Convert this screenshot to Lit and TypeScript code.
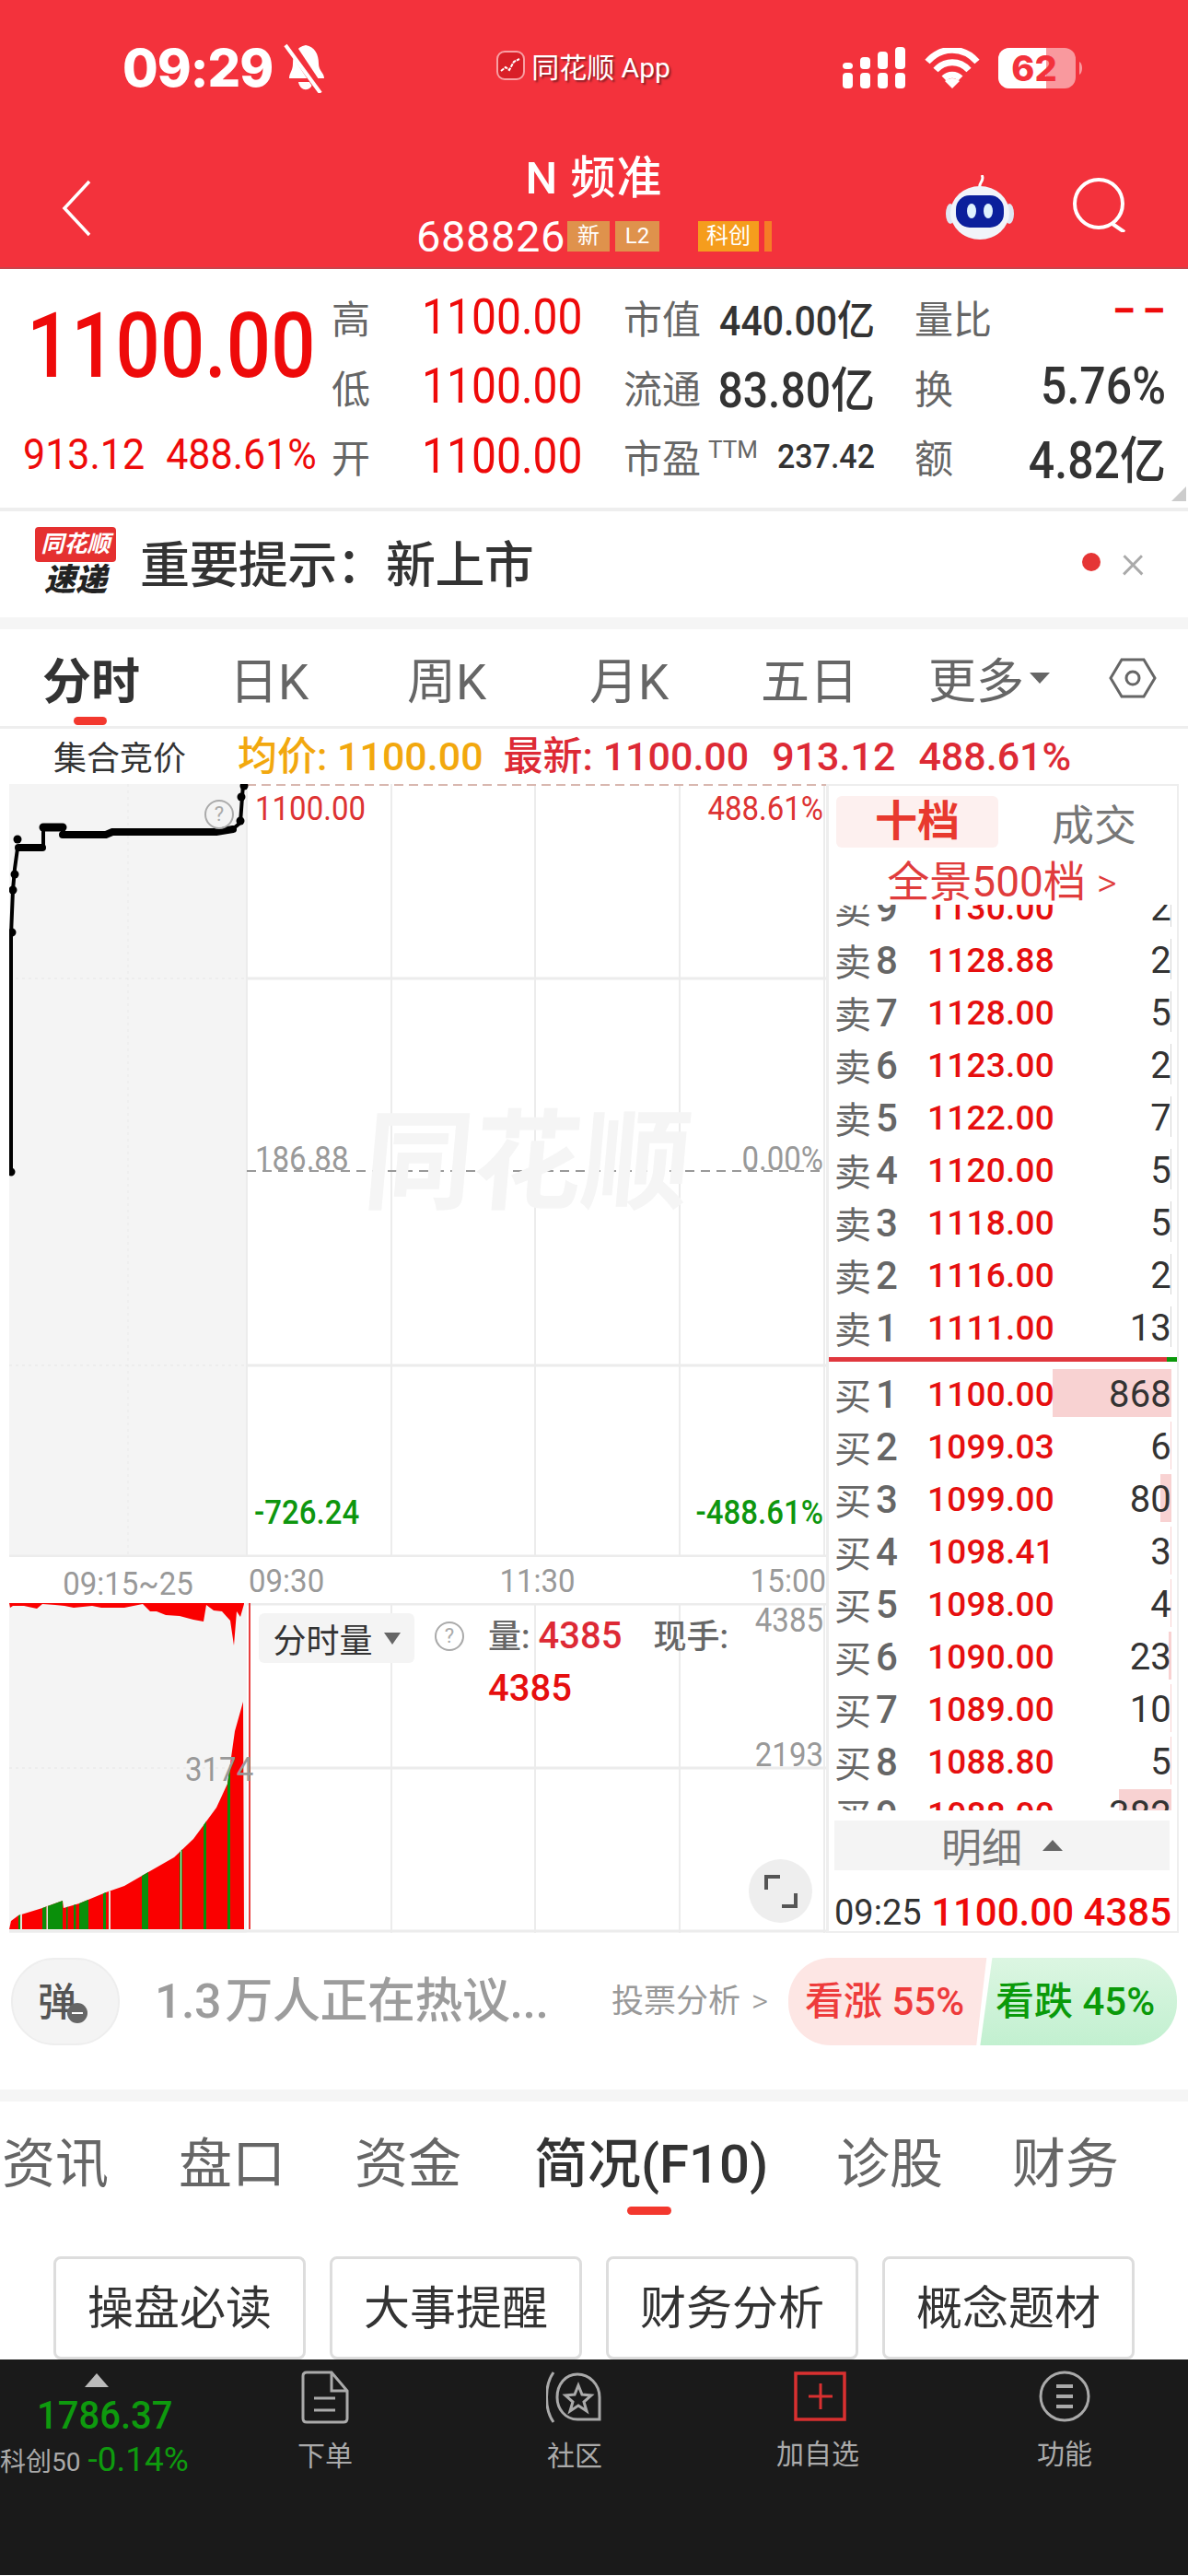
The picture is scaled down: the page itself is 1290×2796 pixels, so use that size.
import { LitElement, html, css, svg } from "lit";
import { customElement } from "lit/decorators.js";

const sells = [
  ["9", "1130.00", "2"],
  ["8", "1128.88", "2"],
  ["7", "1128.00", "5"],
  ["6", "1123.00", "2"],
  ["5", "1122.00", "7"],
  ["4", "1120.00", "5"],
  ["3", "1118.00", "5"],
  ["2", "1116.00", "2"],
  ["1", "1111.00", "13"],
];

const buys = [
  ["1", "1100.00", "868", 129],
  ["2", "1099.03", "6", 1],
  ["3", "1099.00", "80", 12],
  ["4", "1098.41", "3", 1],
  ["5", "1098.00", "4", 1],
  ["6", "1090.00", "23", 3],
  ["7", "1089.00", "10", 1],
  ["8", "1088.80", "5", 1],
  ["9", "1088.00", "382", 57],
];

// label, width of its slot
const tabs: [string, number][] = [["分时", 203], ["日K", 193], ["周K", 198], ["月K", 186], ["五日", 182]];
const lowerTabs = ["资讯", "盘口", "资金", "简况(F10)", "诊股", "财务"];
const quick = ["操盘必读", "大事提醒", "财务分析", "概念题材"];

// volume curve of the auction column, local coordinates of the 887x358 chart
const volCurve = "M0 354 L2 345 L10 339 L36 331 L58 323 L59 331 L76 326 L105 314 L125 307 L151 292 L179 276 L200 256 L225 222 L237 196 L245 139 L254 107 L255 354 Z";
const volTop = "M0 0 L1 5 L4 3 L16 3 L30 6 L36 1 L50 2 L60 3 L70 5 L90 3 L100 5 L125 5 L145 1 L153 9 L160 9 L170 13 L185 14 L200 18 L211 20 L214 2 L222 8 L231 9 L240 19 L244 46 L247 9 L251 15 L255 1 L255 0 Z";
const greenBars = [[10, 2], [36, 4.5], [42, 16], [62, 1.5], [70, 2.5], [76, 10], [102, 3], [144, 7], [185, 3], [211, 3], [237, 3]];
const paleBars = [[40.5, 1.5], [12, 2], [108, 2], [186, 1]];

@customElement("app-root")
export class AppRoot extends LitElement {
  static styles = css`
    :host {
      display: block;
      width: 1290px;
      height: 2796px;
      overflow: hidden;
      background: #fff;
      color: #333;
      font-family: Roboto, "Noto Sans CJK SC", sans-serif;
    }
    .header {
      height: 292px;
      background: #f3323c;
      color: #fff;
      box-sizing: border-box;
      border-bottom: 2px solid #c9444b;
    }
    .status {
      height: 140px;
      display: grid;
      grid-template-columns: 1fr auto 1fr;
      align-items: center;
      box-sizing: border-box;
      padding: 8px 112px 0 133px;
    }
    .status-left { display: flex; align-items: center; gap: 12px; }
    .time { font: 800 56px Inter, Roboto, sans-serif; letter-spacing: -1px; }
    .app-name {
      display: flex;
      align-items: center;
      gap: 7px;
      font-size: 30px;
      margin: -6px 44px 0 0;
      text-shadow: 2px 2px 2px #8a1f27;
    }
    .status-right { display: flex; justify-content: flex-end; align-items: center; gap: 20px; }
    .nav {
      display: grid;
      grid-template-columns: 1fr auto 1fr;
      height: 150px;
    }
    .back { padding: 55px 0 0 66px; }
    .title { text-align: center; }
    .name { font-size: 49px; font-weight: 500; line-height: 56px; margin-top: 26px; letter-spacing: 1px; }
    .code { display: flex; align-items: center; height: 40px; margin-top: 14px; }
    .code b { font-size: 47px; font-weight: 400; margin-right: 2px; letter-spacing: 0.6px; }
    .tag { font-size: 24px; height: 33px; line-height: 33px; text-align: center; background: #df924c; margin-right: 6px; width: 46px; }
    .tag.l2 { width: 48px; margin-right: 42px; }
    .tag.kc { width: 66px; background: #f59d1d; }
    .tag.end { width: 8px; background: #f59d1d; opacity: 0.7; margin: 0; }
    .nav-right { display: flex; justify-content: flex-end; gap: 62px; padding: 50px 66px 0 0; align-items: flex-start; }

    .stats { display: flex; height: 259px; position: relative; }
    .price-block { width: 360px; box-sizing: border-box; padding: 40px 0 0 25px; color: #ee0a0a; }
    .big { font-size: 85px; line-height: 86px; font-weight: 500; margin-left: 4px; transform: scaleY(1.16); transform-origin: 0 50%; }
    .sub { display: flex; gap: 23px; font-size: 43px; margin-top: 50px; line-height: 50px; transform: scaleY(1.08); }
    .grid {
      display: grid;
      grid-template-columns: 98px 219px 273px 43px 273px;
      grid-auto-rows: 75.5px;
      align-items: center;
      padding-top: 14px;
    }
    .lab { font-size: 42px; color: #666; }
    .red { color: #ee0a0a; }
    .val { font-size: 48px; line-height: 50px; transform: scaleY(1.12); }
    .pair { display: flex; justify-content: space-between; align-items: center; }
    .pair .num { color: #333; transform: scaleY(1.1); font-weight: 500; font-size: 48px; }
    .pair .num.wide { font-size: 50px; }
    .pair .num.mid { font-size: 41px; }
    .pair .num.small { font-size: 34px; }
    .dash { font-size: 46px; font-weight: 700; letter-spacing: 7px; margin: -14px -7px 0 0; }
    .ttm { font-size: 26px; color: #666; margin: -14px auto 0 8px; }
    .corner { position: absolute; right: 2px; bottom: 7px; width: 0; height: 0; border-left: 16px solid transparent; border-bottom: 16px solid #ccc; }
    .sep { height: 4px; background: #eee; }
    .notice { height: 115px; display: flex; align-items: center; padding: 0 46px 6px 38px; box-sizing: border-box; }
    .logo { width: 88px; margin-right: 26px; text-align: center; }
    .logo .bub { background: #e53030; color: #fff; font-size: 25px; font-style: italic; font-weight: 700; height: 38px; line-height: 38px; border-radius: 4px; }
    .logo .sd { font-size: 34px; font-style: italic; font-weight: 900; line-height: 38px; color: #222; }
    .notice-text { flex: 1; font-size: 54px; font-weight: 500; letter-spacing: -0.6px; }
    .dot { width: 20px; height: 20px; border-radius: 50%; background: #e53535; margin-right: 22px; }
    .close { font-size: 52px; color: #aaa; font-weight: 300; line-height: 40px; }
    .band { height: 13px; background: #f5f5f5; }

    .tabs { height: 108px; display: flex; align-items: center; border-bottom: 3px solid #eee; box-sizing: border-box; position: relative; padding: 0 34px 0 46px; font-size: 53px; color: #666; }
    .tabs span { flex: none; }
    .tabs span.on { color: #333; font-weight: 700; }
    .tabs .more { display: flex; align-items: center; gap: 6px; flex: 1; font-size: 52px; }
    .tri { width: 0; height: 0; border-left: 11px solid transparent; border-right: 11px solid transparent; border-top: 12px solid #666; }
    .mark { position: absolute; left: 80px; bottom: 1px; width: 36px; height: 9px; border-radius: 5px; background: #f3382e; }
    .quote { height: 60px; display: flex; align-items: baseline; font-size: 43px; line-height: 60px; font-weight: 500; white-space: nowrap; }
    .quote .auction { font-size: 36px; font-weight: 400; width: 200px; padding-left: 58px; box-sizing: border-box; margin-right: 58px; color: #333; }
    .avg { color: #f2a80e; margin-right: 22px; }
    .last { color: #dd2a35; display: flex; gap: 25px; align-items: baseline; }

    .charts { display: flex; height: 1247px; padding-left: 10px; }
    .left { width: 887px; flex: none; display: flex; flex-direction: column; }
    .price-chart { height: 839px; position: relative; }
    .vol-chart { height: 358px; position: relative; }
    .chart-bg { display: block; position: absolute; inset: 0; }
    .axis { position: absolute; font-size: 33px; line-height: 36px; color: #999; transform: scaleY(1.14); }
    .axis.r { right: 3px; }
    .axis.c-red { color: #dd3333; }
    .axis.c-green { color: #0e960e; font-weight: 500; }
    .wm { position: absolute; left: 386px; top: 352px; font-size: 118px; font-weight: 700; color: #f5f5f5; line-height: 120px; white-space: nowrap; transform: skewX(-5deg); }
    .time-row { height: 50px; display: flex; font-size: 33px; color: #999; align-items: center; transform: scaleY(1.08); }
    .time-row .auc { width: 258px; text-align: center; padding-top: 6px; box-sizing: border-box; }
    .time-row .rest { flex: 1; display: flex; justify-content: space-between; padding-left: 2px; }
    .hint { position: absolute; width: 28px; height: 28px; border: 2px solid #aaa; border-radius: 50%; color: #aaa; font-size: 22px; line-height: 28px; text-align: center; font-style: normal; }
    .fs-btn { position: absolute; left: 271px; top: 11px; width: 169px; height: 54px; background: #f4f4f4; border-radius: 6px; display: flex; align-items: center; justify-content: center; gap: 12px; font-size: 36px; }
    .fs-tri { width: 0; height: 0; border-left: 9px solid transparent; border-right: 9px solid transparent; border-top: 13px solid #666; }
    .vol-info { position: absolute; left: 520px; top: 8px; width: 290px; font-size: 36px; line-height: 55px; color: #666; font-weight: 500; }
    .vol-info em { font-style: normal; color: #dd2a35; margin: 0 34px 0 0; font-size: 40px; }
    .vol-info em.next { color: #e60f0f; }
    .expand { position: absolute; left: 803px; top: 278px; width: 69px; height: 69px; border-radius: 50%; background: #eee; display: flex; align-items: center; justify-content: center; }

    .book { width: 383px; flex: none; box-sizing: border-box; border: 2px solid #eee; border-left-width: 3px; height: 1247px; display: flex; flex-direction: column; }
    .book-tabs { height: 64px; padding: 7px 0 0 8px; display: flex; align-items: center; font-size: 46px; box-sizing: content-box; }
    .book-tabs b { width: 176px; height: 56px; line-height: 54px; background: #fdf0ef; border-radius: 6px; text-align: center; color: #e8392e; font-weight: 700; }
    .book-tabs span { flex: 1; text-align: center; color: #777; padding-right: 0; margin-left: 14px; }
    .deep { height: 58px; text-align: center; color: #e03c3c; font-size: 46px; line-height: 66px; white-space: nowrap; padding-right: 2px; flex: none; }
    .deep i { font-style: normal; margin-left: 12px; font-size: 42px; font-weight: 300; }
    .list { overflow: hidden; display: flex; flex-direction: column; flex: none; }
    .list.sell { height: 491px; justify-content: flex-end; padding-bottom: 4px; box-sizing: border-box; }
    .list.buy { height: 487px; padding-top: 6px; box-sizing: border-box; }
    .row { height: 57px; flex: none; display: grid; grid-template-columns: 45px 56px 1fr auto; align-items: center; padding: 0 6px; position: relative; font-size: 37px; letter-spacing: 0.2px; }
    .row .cn { font-size: 40px; color: #666; position: relative; }
    .row .no { color: #666; font-size: 42px; font-weight: 500; position: relative; }
    .row .p { color: #e60f0f; font-weight: 500; position: relative; }
    .row .q { color: #333; position: relative; font-size: 40px; }
    .qbar { position: absolute; right: 6px; top: 2px; height: 52px; background: #f8d2d2; }
    .tick { position: absolute; right: 6px; top: 6px; width: 1px; height: 44px; background: #d5d5d5; }
    .split { height: 5px; flex: none; display: flex; background: #e0373e; }
    .split i { margin-left: auto; width: 11px; background: #0a980a; }
    .detail { margin: 11px 8px 0 6px; height: 54px; background: #f4f4f4; display: flex; align-items: center; justify-content: center; gap: 22px; color: #777; font-size: 44px; flex: none; }
    .up { width: 0; height: 0; border-left: 11px solid transparent; border-right: 11px solid transparent; border-bottom: 12px solid #666; }
    .tape { display: flex; justify-content: space-between; padding: 21px 6px 0 6px; font-size: 42px; color: #ee0a0a; line-height: 50px; font-weight: 500; }
    .tape span:first-child { color: #333; font-size: 38px; font-weight: 400; }

    .talk { height: 170px; display: flex; align-items: flex-start; padding: 27px 12px 0 12px; box-sizing: border-box; }
    .dan { width: 118px; height: 95px; background: #f4f4f4; border: 2px solid #eee; box-sizing: border-box; border-radius: 48px; display: flex; align-items: center; justify-content: center; padding: 0 18px 6px 0; font-size: 42px; color: #555; font-weight: 500; position: relative; margin-right: 38px; }
    .dan i { position: absolute; right: 33px; bottom: 22px; width: 22px; height: 22px; border-radius: 50%; background: #666; }
    .dan i::after { content: ""; position: absolute; left: 5px; right: 5px; top: 10px; height: 2px; background: #fff; }
    .hot { font-size: 52px; color: #9c9c9c; width: 496px; line-height: 95px; white-space: nowrap; font-weight: 500; letter-spacing: -0.5px; word-spacing: -8px; }
    .vote { font-size: 35px; color: #999; width: 192px; line-height: 95px; white-space: nowrap; }
    .vote i { font-style: normal; margin-left: 12px; font-weight: 300; }
    .bull, .bear { height: 95px; line-height: 95px; font-size: 42px; font-weight: 500; white-space: nowrap; box-sizing: border-box; flex: none; }
    .bull { width: 222px; padding-left: 18px; color: #ee3b3b; background: #fde6e4; border-radius: 46px 0 0 46px; clip-path: polygon(0 0, 97% 0, 92% 100%, 0 100%); }
    .bear { width: 218px; margin-left: -18px; padding-left: 21px; color: #0a9a0a; background: linear-gradient(#dcf6e2, #c2f0d0); border-radius: 0 46px 46px 0; clip-path: polygon(8% 0, 100% 0, 100% 100%, 2% 100%); }

    .ltabs { height: 168px; position: relative; font-size: 58px; color: #666; }
    .ltabs span { position: absolute; top: 37px; white-space: nowrap; line-height: 62px; }
    .ltabs span.on { color: #333; font-weight: 500; }
    .ltabs i { position: absolute; left: 681px; top: 114px; width: 48px; height: 9px; border-radius: 5px; background: #f3382e; }
    .quick { height: 112px; display: flex; gap: 26px; padding-left: 58px; }
    .quick div { width: 274px; height: 112px; box-sizing: border-box; border: 3px solid #ddd; border-radius: 8px; font-size: 50px; text-align: center; line-height: 108px; color: #333; }

    .dock { height: 234px; background: #1a1a1a; display: flex; position: relative; }
    .idx { width: 240px; flex: none; position: relative; }
    .idx .arrow { margin: 15px 0 0 92px; width: 0; height: 0; border-left: 13px solid transparent; border-right: 13px solid transparent; border-bottom: 15px solid #bbb; }
    .idx .v { color: #0e9a0e; font-size: 40px; line-height: 46px; margin: 8px 0 0 40px; transform: scaleY(1.08); font-weight: 500; }
    .idx .s { display: flex; align-items: baseline; white-space: nowrap; margin-top: 3px; color: #aaa; font-size: 28px; }
    .idx .s b { font-size: 37px; color: #0e9a0e; font-weight: 400; margin-left: 8px; }
    .act { width: 0; flex: none; position: relative; }
    .cell { position: absolute; top: 12px; width: 160px; margin-left: -80px; text-align: center; color: #aaa; font-size: 30px; }
    .cell svg { display: block; margin: 0 auto 10px; }
  `;

  renderPriceBg() {
    const v = [415, 571, 728, 885];
    return html`<svg class="chart-bg" width="887" height="839" viewBox="0 0 887 839">
      <rect x="0" y="0" width="258" height="839" fill="#f4f4f4"></rect>
      ${v.map((x) => svg`<line x1=${x} y1="0" x2=${x} y2="839" stroke="#ececec" stroke-width="2"></line>`)}
      <line x1="129" y1="0" x2="129" y2="839" stroke="#eaeaea" stroke-width="1" stroke-dasharray="3 4"></line>
      <line x1="258" y1="0" x2="258" y2="839" stroke="#ececec" stroke-width="2"></line>
      <line x1="258" y1="211" x2="887" y2="211" stroke="#ececec" stroke-width="3"></line>
      <line x1="258" y1="631" x2="887" y2="631" stroke="#ececec" stroke-width="3"></line>
      <line x1="0" y1="211" x2="258" y2="211" stroke="#e6e6e6" stroke-dasharray="3 4"></line>
      <line x1="0" y1="631" x2="258" y2="631" stroke="#e6e6e6" stroke-dasharray="3 4"></line>
      <line x1="258" y1="1" x2="887" y2="1" stroke="#d9b8b0" stroke-width="2" stroke-dasharray="10 6"></line>
      <line x1="258" y1="420" x2="887" y2="420" stroke="#999" stroke-width="2" stroke-dasharray="10 7"></line>
      <line x1="0" y1="838" x2="887" y2="838" stroke="#ececec" stroke-width="3"></line>
      <path d="M2 421 L2 164 L4 115 L6 92 L9 70 L9 69" fill="none" stroke="#000" stroke-width="4"></path>
      <path d="M9 69 L37 69 L37 47 L58 46 L58 56 L105 56 L115 52 L225 52 L245 47 L251 42 L254 0" fill="none" stroke="#000" stroke-width="4"></path>
      <path d="M10 69 L36 69" stroke="#000" stroke-width="8" stroke-linecap="round"></path>
      <path d="M37 47 L58 47" stroke="#000" stroke-width="9" stroke-linecap="round"></path>
      <path d="M58 55 L105 55 L112 52 L225 52 L243 49" fill="none" stroke="#000" stroke-width="8" stroke-linecap="round"></path>
      ${[[2, 421], [3, 161], [4, 115], [6, 98], [9, 60], [252, 14], [251, 40], [255, 2]].map(
        ([x, y]) => svg`<circle cx=${x} cy=${y} r="4.5" fill="#000"></circle>`
      )}
    </svg>`;
  }

  renderVolBg() {
    const v = [415, 571, 728, 885];
    return html`<svg class="chart-bg" width="887" height="358" viewBox="0 0 887 358">
      <rect x="0" y="0" width="258" height="358" fill="#f4f4f4"></rect>
      ${v.map((x) => svg`<line x1=${x} y1="0" x2=${x} y2="358" stroke="#ececec" stroke-width="2"></line>`)}
      <line x1="258" y1="1" x2="887" y2="1" stroke="#ececec" stroke-width="3"></line>
      <line x1="258" y1="179" x2="887" y2="179" stroke="#ececec" stroke-width="3"></line>
      <line x1="0" y1="356" x2="887" y2="356" stroke="#ececec" stroke-width="3"></line>
      <line x1="0" y1="179" x2="258" y2="179" stroke="#e6e6e6" stroke-dasharray="3 4"></line>
      <path d=${volCurve} fill="#fa0000"></path>
      <path d=${volTop} fill="#fa0000"></path>
      <clipPath id="volclip"><path d=${volCurve}></path></clipPath>
      <g clip-path="url(#volclip)">
        ${greenBars.map(([x, w]) => svg`<rect x=${x} y="0" width=${w} height="358" fill="#0a8f0a"></rect>`)}
        ${paleBars.map(([x, w]) => svg`<rect x=${x} y="0" width=${w} height="358" fill="#e4e4d8"></rect>`)}
      </g>
      <line x1="261" y1="0" x2="261" y2="354" stroke="#e84040" stroke-width="2"></line>
    </svg>`;
  }

  render() {
    return html`
      <div class="header">
        <div class="status">
          <div class="status-left">
            <span class="time">09:29</span>
            <svg width="46" height="54" viewBox="0 0 46 54">
              <path d="M24 2 C34 4 38 12 38 22 C38 30 44 32 44 38 L6 38 C6 32 10 30 10 22 C10 12 14 4 24 2 Z M16 42 L32 42 C30 53 18 53 16 42 Z" fill="#fff"></path>
              <path d="M6 0 L42 54" stroke="#f3323c" stroke-width="10"></path>
              <path d="M2 2 L40 54" stroke="#fff" stroke-width="4"></path>
            </svg>
          </div>
          <div class="app-name">
            <svg width="31" height="32" viewBox="0 0 31 32">
              <rect x="1" y="1" width="29" height="30" rx="8" fill="#d91f28" stroke="#f9a0a4" stroke-width="2"></rect>
              <path d="M5 22 L10 18 L14 21 L19 12 L25 9" fill="none" stroke="#fff" stroke-width="2" stroke-dasharray="4 1"></path>
            </svg>
            <span>同花顺 App</span>
          </div>
          <div class="status-right">
            <svg width="70" height="46" viewBox="0 0 70 46">
              ${[[1, 17], [20, 11], [39, 5], [58, 0]].map(([x, y]) => svg`
                <rect x=${x} y=${y} width="11" height=${24 - y} rx="4" fill="#fff"></rect>
                <rect x=${x} y="28" width="11" height="17" rx="4" fill="#fff"></rect>`)}
            </svg>
            <svg width="60" height="44" viewBox="0 0 60 44">
              <path d="M3 15 C18 -2 42 -2 57 15 M12 24 C22 13 38 13 48 24 M21 33 C26 28 34 28 39 33" fill="none" stroke="#fff" stroke-width="7"></path>
              <path d="M30 44 L22 36 C27 32 33 32 38 36 Z" fill="#fff"></path>
            </svg>
            <svg width="94" height="46" viewBox="0 0 94 46">
              <rect x="0" y="1" width="84" height="44" rx="12" fill="#fff" fill-opacity="0.5"></rect>
              <path d="M12 1 L52 1 L52 45 L12 45 A12 12 0 0 1 0 33 L0 13 A12 12 0 0 1 12 1 Z" fill="#fff"></path>
              <path d="M88 16 C92 18 92 28 88 30 Z" fill="#fff" fill-opacity="0.5"></path>
              <text x="39" y="37" text-anchor="middle" font-family="Inter, Roboto, sans-serif" font-weight="800" font-size="38" fill="#f3323c">62</text>
            </svg>
          </div>
        </div>
        <div class="nav">
          <div class="back">
            <svg width="34" height="62" viewBox="0 0 34 62"><path d="M31 2 L4 31 L31 60" fill="none" stroke="#fff" stroke-width="3.5"></path></svg>
          </div>
          <div class="title">
            <div class="name">N 频准</div>
            <div class="code">
              <b>688826</b><span class="tag">新</span><span class="tag l2">L2</span><span class="tag kc">科创</span><span class="tag end"></span>
            </div>
          </div>
          <div class="nav-right">
            <svg width="76" height="70" viewBox="0 0 76 70">
              <path d="M38 14 C36 8 44 6 40 0" fill="none" stroke="#fff" stroke-width="3"></path>
              <ellipse cx="6" cy="42" rx="5" ry="11" fill="#dfe6f2"></ellipse>
              <ellipse cx="70" cy="42" rx="5" ry="11" fill="#dfe6f2"></ellipse>
              <ellipse cx="38" cy="41" rx="32" ry="29" fill="#f1f4fa"></ellipse>
              <rect x="12" y="22" width="52" height="35" rx="15" fill="#0b1f9c"></rect>
              <ellipse cx="29" cy="39" rx="5" ry="8" fill="#dff2ff"></ellipse>
              <ellipse cx="47" cy="39" rx="5" ry="8" fill="#dff2ff"></ellipse>
            </svg>
            <svg class="search" width="60" height="62" viewBox="0 0 60 62">
              <circle cx="29" cy="31" r="26" fill="none" stroke="#fff" stroke-width="4"></circle>
              <path d="M44 53 L57 62" stroke="#fff" stroke-width="4"></path>
            </svg>
          </div>
        </div>
      </div>

      <div class="stats">
        <div class="price-block">
          <div class="big">1100.00</div>
          <div class="sub"><span>913.12</span><span>488.61%</span></div>
        </div>
        <div class="grid">
          <span class="lab">高</span><span class="val red">1100.00</span>
          <div class="pair"><span class="lab">市值</span><span class="num mid">440.00亿</span></div>
          <span></span>
          <div class="pair"><span class="lab">量比</span><span class="red dash">−−</span></div>

          <span class="lab">低</span><span class="val red">1100.00</span>
          <div class="pair"><span class="lab">流通</span><span class="num">83.80亿</span></div>
          <span></span>
          <div class="pair"><span class="lab">换</span><span class="num wide">5.76%</span></div>

          <span class="lab">开</span><span class="val red">1100.00</span>
          <div class="pair"><span class="lab">市盈</span><span class="ttm">TTM</span><span class="num small">237.42</span></div>
          <span></span>
          <div class="pair"><span class="lab">额</span><span class="num wide">4.82亿</span></div>
        </div>
        <i class="corner"></i>
      </div>
      <div class="sep"></div>

      <div class="notice">
        <div class="logo"><div class="bub">同花顺</div><div class="sd">速递</div></div>
        <div class="notice-text">重要提示：新上市</div>
        <i class="dot"></i>
        <span class="close">×</span>
      </div>
      <div class="band"></div>

      <div class="tabs">
        ${tabs.map(([t, w], i) => html`<span class=${i === 0 ? "on" : ""} style="width:${w}px">${t}</span>`)}
        <span class="more">更多<i class="tri"></i></span>
        <svg width="52" height="46" viewBox="0 0 52 46">
          <path d="M14 3 L38 3 L50 23 L38 43 L14 43 L2 23 Z" fill="none" stroke="#666" stroke-width="3"></path>
          <circle cx="26" cy="23" r="7" fill="none" stroke="#666" stroke-width="3"></circle>
        </svg>
        <i class="mark"></i>
      </div>

      <div class="quote">
        <span class="auction">集合竞价</span>
        <span class="avg">均价: 1100.00</span>
        <span class="last"><span>最新: 1100.00</span><span>913.12</span><span>488.61%</span></span>
      </div>

      <div class="charts">
        <div class="left">
          <div class="price-chart">
            ${this.renderPriceBg()}
            <span class="wm">同花顺</span>
            <i class="hint" style="left:212px;top:17px">?</i>
            <span class="axis c-red" style="left:267px;top:8px">1100.00</span>
            <span class="axis r c-red" style="top:8px">488.61%</span>
            <span class="axis" style="left:267px;top:388px">186.88</span>
            <span class="axis r" style="top:388px">0.00%</span>
            <span class="axis c-green" style="left:266px;top:772px">-726.24</span>
            <span class="axis r c-green" style="top:772px">-488.61%</span>
          </div>
          <div class="time-row">
            <span class="auc">09:15~25</span>
            <span class="rest"><span>09:30</span><span>11:30</span><span>15:00</span></span>
          </div>
          <div class="vol-chart">
            ${this.renderVolBg()}
            <span class="axis" style="left:191px;top:162px">3174</span>
            <div class="fs-btn"><span>分时量</span><i class="fs-tri"></i></div>
            <i class="hint" style="left:462px;top:20px">?</i>
            <div class="vol-info">量: <em>4385</em>现手:<br /><em class="next">4385</em></div>
            <span class="axis r" style="top:0">4385</span>
            <span class="axis r" style="top:146px">2193</span>
            <div class="expand">
              <svg width="36" height="36" viewBox="0 0 36 36">
                <path d="M2 16 L2 2 L17 2 M34 20 L34 34 L19 34" fill="none" stroke="#555" stroke-width="4"></path>
              </svg>
            </div>
          </div>
        </div>

        <div class="book">
          <div class="book-tabs"><b>十档</b><span>成交</span></div>
          <div class="deep">全景500档<i>&gt;</i></div>
          <div class="list sell">
            ${sells.map(
              ([n, p, q]) => html`<div class="row">
                <span class="cn">卖</span><span class="no">${n}</span><span class="p">${p}</span><span class="q">${q}</span>
                <i class="tick"></i>
              </div>`
            )}
          </div>
          <div class="split"><i></i></div>
          <div class="list buy">
            ${buys.map(
              ([n, p, q, w]) => html`<div class="row">
                <i class="qbar" style="width:${w}px"></i>
                <span class="cn">买</span><span class="no">${n}</span><span class="p">${p}</span><span class="q">${q}</span>
              </div>`
            )}
          </div>
          <div class="detail"><span>明细</span><i class="up"></i></div>
          <div class="tape"><span>09:25</span><span>1100.00</span><span>4385</span></div>
        </div>
      </div>

      <div class="talk">
        <div class="dan">弹<i></i></div>
        <div class="hot">1.3 万人正在热议...</div>
        <div class="vote">投票分析<i>&gt;</i></div>
        <div class="bull">看涨 55%</div>
        <div class="bear">看跌 45%</div>
      </div>
      <div class="band"></div>

      <div class="ltabs">
        ${lowerTabs.map((t, i) => {
          const left = [2, 194, 385, 580, 908, 1099][i];
          return html`<span class=${i === 3 ? "on" : ""} style="left:${left}px">${t}</span>`;
        })}
        <i></i>
      </div>
      <div class="quick">${quick.map((q) => html`<div>${q}</div>`)}</div>

      <div class="dock">
        <div class="idx">
          <div class="arrow"></div>
          <div class="v">1786.37</div>
          <div class="s"><span>科创50</span><b>-0.14%</b></div>
        </div>
        <div class="act">
          <div class="cell" style="left:113px">
            <svg width="54" height="58" viewBox="0 0 54 58"><path d="M3 6 Q3 2 7 2 L34 2 L51 22 L51 52 Q51 56 47 56 L7 56 Q3 56 3 52 Z M34 2 L34 22 L51 22 M15 30 L38 30 M15 43 L38 43" fill="none" stroke="#aaa" stroke-width="3"></path></svg>
            下单
          </div>
        </div>
        <div class="act">
          <div class="cell" style="left:384px">
            <svg width="62" height="58" viewBox="0 0 62 58">
              <path d="M8 2 C-2 16 -2 42 8 56" fill="none" stroke="#aaa" stroke-width="3"></path>
              <path d="M34 4 C47 4 58 15 58 29 L58 53 L34 53 C21 53 12 42 12 29 C12 15 21 4 34 4 Z" fill="none" stroke="#aaa" stroke-width="3"></path>
              <path d="M35 16 L39 26 L49 27 L41 34 L44 44 L35 38 L26 44 L29 34 L21 27 L31 26 Z" fill="none" stroke="#aaa" stroke-width="3"></path>
            </svg>
            社区
          </div>
        </div>
        <div class="act">
          <div class="cell" style="left:648px">
            <svg width="62" height="56" viewBox="0 0 62 56"><rect x="7" y="3" width="53" height="50" fill="none" stroke="#d93030" stroke-width="3.5"></rect><path d="M21 28 L47 28 M34 14 L34 42" stroke="#d93030" stroke-width="3"></path></svg>
            加自选
          </div>
        </div>
        <div class="act">
          <div class="cell" style="left:916px">
            <svg width="58" height="56" viewBox="0 0 58 56"><circle cx="29" cy="28" r="26" fill="none" stroke="#aaa" stroke-width="3"></circle><path d="M20 17 L38 17 M20 28 L38 28 M20 39 L38 39" stroke="#aaa" stroke-width="4"></path></svg>
            功能
          </div>
        </div>
      </div>
    `;
  }
}
